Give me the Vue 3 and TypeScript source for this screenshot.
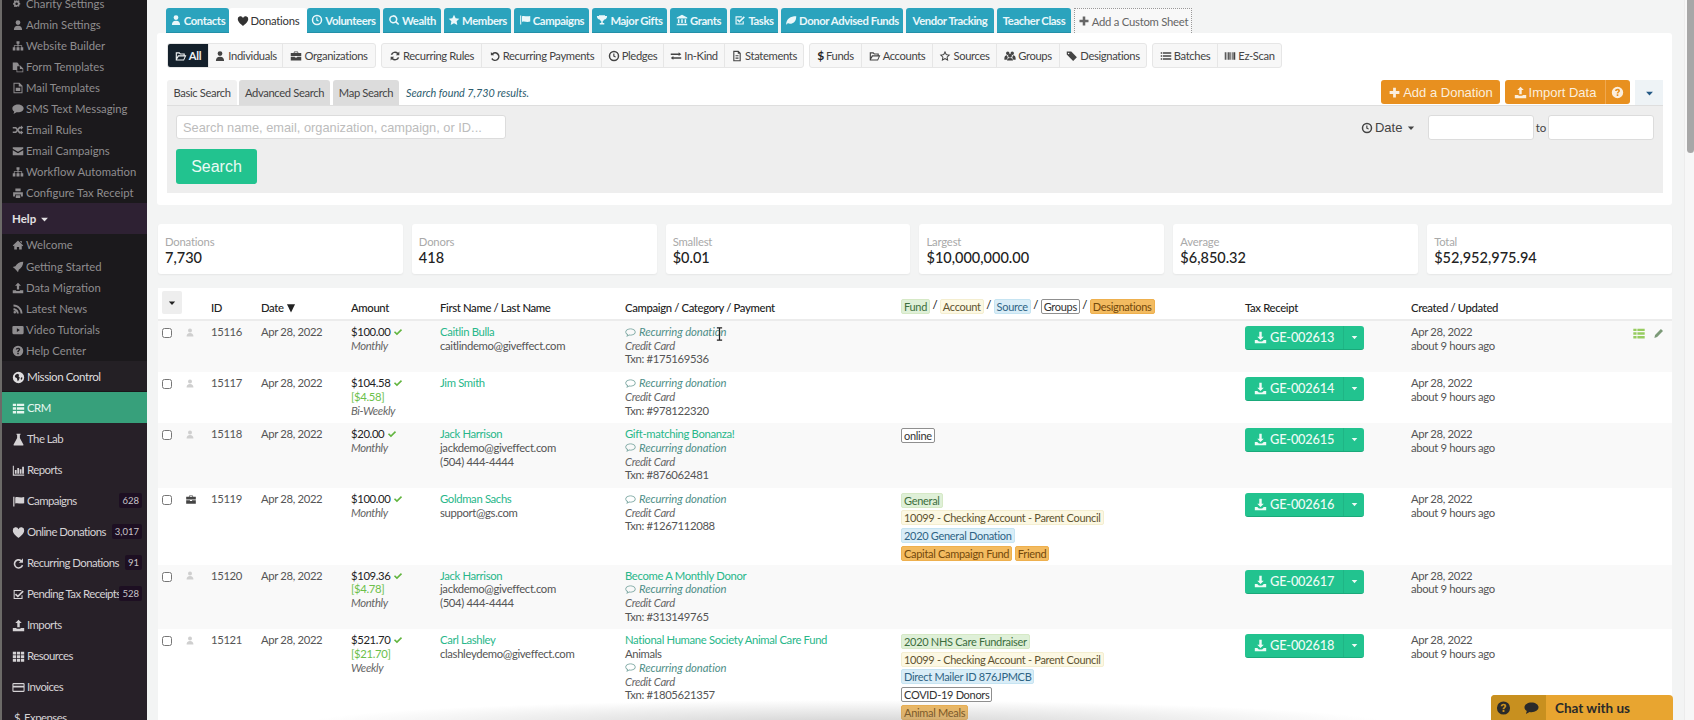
<script setup lang="ts">
import { defineComponent, h } from 'vue'

const icons: Record<string, string> = {
  user: 'M8 1.500a3.200 3.200 0 1 1 0 6.400 3.200 3.200 0 0 1 0-6.400zM2.500 14.500c0-3.600 2-5.600 5.500-5.600s5.500 2 5.500 5.600z',
  heart: 'M8 14.500S1 10 1 5.400A3.600 3.600 0 0 1 8 4a3.600 3.600 0 0 1 7 1.400C15 10 8 14.500 8 14.500z',
  clock: 'M8 1a7 7 0 1 0 0 14A7 7 0 0 0 8 1zm0 2a5 5 0 1 1 0 10A5 5 0 0 1 8 3zM7 4.500h1.600v3.200l2 1.200-.8 1.200L7 8.600z',
  search: 'M7 1.500a5.500 5.500 0 1 0 3.200 10l3.300 3.300 1.500-1.500-3.300-3.300A5.500 5.500 0 0 0 7 1.500zm0 2a3.500 3.500 0 1 1 0 7 3.500 3.500 0 0 1 0-7z',
  star: 'M8 1l2.200 4.500 4.900.7-3.600 3.500.9 4.900L8 12.300l-4.400 2.300.9-4.900L.9 6.200l4.900-.7z',
  starO: 'M8 1l2.200 4.500 4.900.7-3.600 3.500.9 4.900L8 12.300l-4.400 2.300.9-4.900L.9 6.200l4.900-.7zM8 4.200L6.700 6.800l-2.900.4 2.100 2-.5 2.900L8 10.800l2.600 1.300-.5-2.900 2.100-2-2.900-.4z',
  flag: 'M1.500 2H3v12H1.500zM4 3c3-1.500 6 1 11-.5v7.500c-5 1.500-8-1-11 .5z',
  trophy: 'M4 1.500h8v1h2.800c0 3-1.600 4.600-3.600 4.900A4 4 0 0 1 9 9.400V12h2v2H5v-2h2V9.400a4 4 0 0 1-2.200-2C2.800 7.100 1.200 5.500 1.200 2.500H4z',
  bank: 'M8 1l7 3.500V6H1V4.500zM2.500 7h2v5h-2zM7 7h2v5H7zM11.500 7h2v5h-2zM1 13h14v2H1z',
  checkO: 'M2 3h8.500v1.500h-7v8h8V9.500H13V14H2zM5.300 6.800l2 2L13 3l1.500 1.500-7.200 7.200-3.500-3.500z',
  leaf: 'M1.500 13.500C2 6.500 7 3 15 3c0 7-4 10-8 10-1.500 0-2.600-.4-3.200-.9l-1.300 1.900z',
  folder: 'M1 3h5l1.500 1.500H13V7h2.200L12 14H1zM2.500 4.500v5l1.500-2.500H11.500V6H6.800L5.300 4.500zM5 8.500l-2.500 4h8.700l1.800-4z',
  case: 'M6 2h4a1 1 0 0 1 1 1v1h4v4H1V4h4V3a1 1 0 0 1 1-1zm0 1v1h4V3zM1 9h5.500v1h3V9H15v5H1z',
  refresh: 'M13.800 2v5H9l1.800-1.800a4 4 0 0 0-6.500 1.300l-2-.5a6 6 0 0 1 9.900-2.200zM2.200 14V9H7l-1.800 1.800a4 4 0 0 0 6.500-1.300l2 .5a6 6 0 0 1-9.900 2.200z',
  undo: 'M2.500 2.500l1.700 1.700A6 6 0 1 1 3 12l1.500-1.300A4 4 0 1 0 5.600 5.600L7 7H2.500z',
  exchange: 'M1 4.500h10.500V3L15 5.500 11.500 8V6.500H1zM15 9.500H4.500V8L1 10.500 4.500 13v-1.500H15z',
  file: 'M3 1h7l3 3v11H3zM4.500 2.500v11h7V5H9V2.500zM6 7h4v1H6zM6 9h4v1H6zM6 11h4v1H6z',
  tags: 'M1 2h6l7.500 7.500-5 5L1 6zM3.500 3.500a1 1 0 1 0 0 2 1 1 0 0 0 0-2z',
  group: 'M5 2a2.300 2.300 0 1 1 0 4.600A2.300 2.300 0 0 1 5 2zM11 2a2.300 2.300 0 1 1 0 4.600A2.300 2.300 0 0 1 11 2zM8 5a2.600 2.600 0 1 1 0 5.200A2.600 2.600 0 0 1 8 5zM0.500 11c0-2.500 1.500-4 3.500-4l1 3-1.500 3H.5zM15.500 11c0-2.500-1.500-4-3.500-4l-1 3 1.500 3h3zM4 14c0-2.500 1.500-3.500 4-3.500s4 1 4 3.500z',
  list: 'M1 3h2v2H1zM4 3h11v2H4zM1 7h2v2H1zM4 7h11v2H4zM1 11h2v2H1zM4 11h11v2H4z',
  barcode: 'M1 3h1.500v10H1zM3.500 3h1v10h-1zM5.500 3h2v10h-2zM8.500 3h1v10h-1zM10.500 3h1v10h-1zM12.500 3h2.500v10h-2.500z',
  plus: 'M6.300 2h3.400v4.300H14v3.400H9.700V14H6.300V9.700H2V6.300h4.300z',
  upload: 'M8 1l4 4H9.500v5h-3V5H4zM1 11h4.500v1h5v-1H15v4H1z',
  download: 'M6.500 1h3v6H12l-4 4-4-4h2.500zM1 11h3l2 2h4l2-2h3v4H1z',
  help: 'M8 1a7 7 0 1 0 0 14A7 7 0 0 0 8 1zM8 3.500c-1.800 0-3 1-3 2.600h2c0-.6.4-1 1-1s1 .3 1 .9c0 1-2 1.200-2 3.200h2c0-1.300 2-1.500 2-3.400 0-1.500-1.200-2.300-3-2.300zM7 10.200h2v2H7z',
  caret: 'M3 5.500h10L8 11z',
  sort: 'M1.500 2h13L8 15z',
  gears: 'M6 3l1.500.5L9 3l1 1-.5 1.500L11 7v1.500l-1.500.5.500 1.500-1 1-1.500-.5L6 12l-1-.5-1.500.5-1-1 .5-1.500L1.500 8.500V7L3 5.500 2.500 4l1-1L5 3.500zM6.200 6a1.700 1.700 0 1 0 0 3.400 1.700 1.700 0 0 0 0-3.400z',
  sitemap: 'M6 1.500h4v3.500H8.800v2H13.500v2.500H15V14h-3.500V9.500h1V8H8.500v1.500H10V14H6V9.500h1.500V8H3.500v1.500h1V14H1V9.500h1.500V7h4.700V5H6z',
  files: 'M1 2h6l2 2v2h2l4 4v5H6v-3H1zM7 7v7h7v-3.500h-3.500V7z',
  mail: 'M2 1h8l4 4v10H2zM3.300 2.300v11.400h9.400V6H9V2.300zM5 7.500h6V12H5z',
  comment: 'M8 2c4 0 7.500 2.200 7.500 5.200S12 12.400 8 12.400c-.7 0-1.400 0-2-.2L2 14.500l1-3.200C1.500 10.300.5 8.800.5 7.200.5 4.200 4 2 8 2z',
  commentO: 'M8 2c4 0 7.500 2.200 7.500 5.200S12 12.400 8 12.400c-.7 0-1.400 0-2-.2L2 14.500l1-3.200C1.500 10.300.5 8.800.5 7.200.5 4.200 4 2 8 2zM8 3.200c-3.400 0-6.300 1.800-6.300 4 0 1.300 1 2.500 2.700 3.300l-.5 1.700 2-1.200c.6.100 1.400.200 2.100.200 3.400 0 6.300-1.800 6.300-4s-2.900-4-6.300-4z',
  random: 'M12 2l3 2.700L12 7.500V6h-1.500L8.800 8l1.700 2H12V8.500l3 2.800-3 2.700v-1.500h-2.500L7.500 9.800 5.500 12H1V10h3.500l1.700-2-1.700-2H1V4h4.500l2 2.200L9.500 3.500H12z',
  envelope: 'M1 3h14v2L8 9 1 5zM1 7l7 4 7-4v6.500H1z',
  print: 'M4.500 2h7v3.500h-7zM1.500 7h13v5.500H12V10H4v2.500H1.500zM5 11h6v3.500H5z',
  home: 'M8 2l7 6.500-1 1-1-.9V14H9.500v-3.500h-3V14H3V8.600l-1 .9-1-1zM11 2.500h2v3l-2-1.800z',
  rocket: 'M15 1c0 5-2.500 8.500-6 10.500L8 15l-2-2.500L3.500 10 1 8l3.500-1C6.500 3.500 10 1 15 1z',
  rss: 'M2 2c6.600 0 12 5.400 12 12h-2.500C11.500 8.800 7.200 4.500 2 4.500zM2 7c3.900 0 7 3.100 7 7H6.500C6.500 11.500 4.500 9.500 2 9.500zM3.700 10.700a1.700 1.700 0 1 1 0 3.400 1.700 1.700 0 0 1 0-3.400z',
  video: 'M2 2.500h12a1.500 1.500 0 0 1 1.500 1.500v8a1.500 1.500 0 0 1-1.500 1.500H2A1.500 1.500 0 0 1 .5 12V4A1.500 1.500 0 0 1 2 2.500zM6.500 5.500v5l4-2.500z',
  globe: 'M8 1a7 7 0 1 0 0 14A7 7 0 0 0 8 1zM4 5l2.500-1.500L9 4.500 8 6.500 9.500 8l-1 3L7 12.500 6 9 3.500 7.500zM10.500 9.500L12 7.500l1 1-1.500 2.500z',
  table: 'M1 2h4v3H1zM6 2h9v3H6zM1 6.500h4v3H1zM6 6.500h9v3H6zM1 11h4v3H1zM6 11h9v3H6z',
  flask: 'M5.500 1h5v1.300h-.8v4L14 14a1 1 0 0 1-.9 1.500H2.900A1 1 0 0 1 2 14l4.300-7.700v-4h-.8z',
  chart: 'M1 2h1.300v11H15v1.500H1zM3.500 7.500h2.200V12H3.500zM6.500 5h2.200v7H6.500zM9.500 6.500h2.200V12H9.500zM12.500 3.500h2.200V12h-2.200z',
  recycle: 'M13.500 1.500V7H8.300l1.900-1.900A4 4 0 1 0 12 9.500l1.800 1A6 6 0 1 1 11.700 3.600z',
  squareCheck: 'M2 2.500h9.500v1.300H3.300v8.400h8.400V9H13v4.500H2zM5 6.800l2.200 2.200L13 3l1.500 1.500-7.300 7.200L3.500 8.300z',
  grid: 'M1 2h4v3.500H1zM6 2h4v3.500H6zM11 2h4v3.500h-4zM1 6.500h4V10H1zM6 6.500h4V10H6zM11 6.500h4V10h-4zM1 11h4v3.500H1zM6 11h4v3.500H6zM11 11h4v3.500h-4z',
  card: 'M2 2.500h12a1.500 1.500 0 0 1 1.500 1.500v8a1.500 1.500 0 0 1-1.500 1.500H2A1.500 1.500 0 0 1 .5 12V4A1.500 1.500 0 0 1 2 2.500zM1.800 4v1.700h12.400V4zM1.800 8v4h12.400V8z',
  check: 'M1.500 8.500l1.800-1.800 3 3 6.400-6.400 1.800 1.800L6.300 13.300z',
  pencil: 'M11.500 1.500l3 3L6 13l-4 1.500L3 10z',
}

const Ico = defineComponent({
  props: { n: { type: String, required: true } },
  setup(p) {
    return () =>
      h('svg', { class: 'ico', viewBox: '0 0 16 16', 'aria-hidden': 'true' }, [
        h('path', { d: icons[p.n], 'fill-rule': 'evenodd', fill: 'currentColor' }),
      ])
  },
})

const settings = [
  ['gears', 'Charity Settings'],
  ['user', 'Admin Settings'],
  ['sitemap', 'Website Builder'],
  ['files', 'Form Templates'],
  ['mail', 'Mail Templates'],
  ['comment', 'SMS Text Messaging'],
  ['random', 'Email Rules'],
  ['envelope', 'Email Campaigns'],
  ['sitemap', 'Workflow Automation'],
  ['print', 'Configure Tax Receipt'],
]
const helpLinks = [
  ['home', 'Welcome'],
  ['rocket', 'Getting Started'],
  ['upload', 'Data Migration'],
  ['rss', 'Latest News'],
  ['video', 'Video Tutorials'],
  ['help', 'Help Center'],
]
const mainNav = [
  { icon: 'table', label: 'CRM', active: true },
  { icon: 'flask', label: 'The Lab' },
  { icon: 'chart', label: 'Reports' },
  { icon: 'flag', label: 'Campaigns', badge: '628' },
  { icon: 'heart', label: 'Online Donations', badge: '3,017' },
  { icon: 'recycle', label: 'Recurring Donations', badge: '91' },
  { icon: 'squareCheck', label: 'Pending Tax Receipts', badge: '528' },
  { icon: 'upload', label: 'Imports' },
  { icon: 'grid', label: 'Resources' },
  { icon: 'card', label: 'Invoices' },
]

const sheets = [
  ['user', 'Contacts', 63],
  ['heart', 'Donations', 78],
  ['clock', 'Volunteers', 73],
  ['search', 'Wealth', 58],
  ['star', 'Members', 67],
  ['flag', 'Campaigns', 75],
  ['trophy', 'Major Gifts', 75],
  ['bank', 'Grants', 57],
  ['checkO', 'Tasks', 48],
  ['leaf', 'Donor Advised Funds', 122],
  ['', 'Vendor Tracking', 88],
  ['', 'Teacher Class', 74],
]

const subGroups = [
  [['folder', 'All', 40], ['user', 'Individuals', 74], ['case', 'Organizations', 93]],
  [['refresh', 'Recurring Rules', 99], ['undo', 'Recurring Payments', 120], ['clock', 'Pledges', 62], ['exchange', 'In-Kind', 61], ['file', 'Statements', 79]],
  [['$', 'Funds', 51], ['folder', 'Accounts', 71], ['starO', 'Sources', 64], ['group', 'Groups', 63], ['tags', 'Designations', 87]],
  [['list', 'Batches', 64], ['barcode', 'Ez-Scan', 64]],
]

const stats = [
  ['Donations', '7,730'],
  ['Donors', '418'],
  ['Smallest', '$0.01'],
  ['Largest', '$10,000,000.00'],
  ['Average', '$6,850.32'],
  ['Total', '$52,952,975.94'],
]

type Tag = [string, string]
interface Row {
  id: number
  org?: boolean
  amount: string
  fee?: string
  freq: string
  name: string
  contact: string[]
  campaign?: string
  category?: string
  txn: string
  tags: Tag[]
  receipt: string
  actions?: boolean
}

const rows: Row[] = [
  { id: 15116, amount: '$100.00', freq: 'Monthly', name: 'Caitlin Bulla', contact: ['caitlindemo@giveffect.com'], txn: '#175169536', tags: [], receipt: 'GE-002613', actions: true },
  { id: 15117, amount: '$104.58', fee: '[$4.58]', freq: 'Bi-Weekly', name: 'Jim Smith', contact: [], txn: '#978122320', tags: [], receipt: 'GE-002614' },
  { id: 15118, amount: '$20.00', freq: 'Monthly', name: 'Jack Harrison', contact: ['jackdemo@giveffect.com', '(504) 444-4444'], campaign: 'Gift-matching Bonanza!', txn: '#876062481', tags: [['grp', 'online']], receipt: 'GE-002615' },
  { id: 15119, org: true, amount: '$100.00', freq: 'Monthly', name: 'Goldman Sachs', contact: ['support@gs.com'], txn: '#1267112088', tags: [['fund', 'General'], ['acct', '10099 - Checking Account - Parent Council'], ['src', '2020 General Donation'], ['des', 'Capital Campaign Fund'], ['des', 'Friend']], receipt: 'GE-002616' },
  { id: 15120, amount: '$109.36', fee: '[$4.78]', freq: 'Monthly', name: 'Jack Harrison', contact: ['jackdemo@giveffect.com', '(504) 444-4444'], campaign: 'Become A Monthly Donor', txn: '#313149765', tags: [], receipt: 'GE-002617' },
  { id: 15121, amount: '$521.70', fee: '[$21.70]', freq: 'Weekly', name: 'Carl Lashley', contact: ['clashleydemo@giveffect.com'], campaign: 'National Humane Society Animal Care Fund', category: 'Animals', txn: '#1805621357', tags: [['fund', '2020 NHS Care Fundraiser'], ['acct', '10099 - Checking Account - Parent Council'], ['src', 'Direct Mailer ID 876JPMCB'], ['grp', 'COVID-19 Donors'], ['des', 'Animal Meals']], receipt: 'GE-002618' },
]
</script>

<template>
  <div class="app">
    <div class="rail"></div>
    <aside class="sidebar">
      <ul class="sub first">
        <li v-for="s in settings" :key="s[1]"><Ico :n="s[0]" />{{ s[1] }}</li>
      </ul>
      <div class="help-head">Help <Ico n="caret" /></div>
      <ul class="sub">
        <li v-for="s in helpLinks" :key="s[1]"><Ico :n="s[0]" />{{ s[1] }}</li>
      </ul>
      <div class="mission"><Ico n="globe" />Mission Control</div>
      <ul class="nav">
        <li v-for="m in mainNav" :key="m.label" :class="{ active: m.active }">
          <Ico :n="m.icon" />{{ m.label }}
          <span v-if="m.badge" class="badge">{{ m.badge }}</span>
        </li>
        <li><span class="dollar">$</span>Expenses</li>
      </ul>
    </aside>

    <main class="main">
      <nav class="sheets">
        <a
          v-for="s in sheets"
          :key="s[1]"
          class="sheet"
          :class="{ current: s[1] === 'Donations' }"
          :style="{ width: s[2] + 'px' }"
        ><Ico v-if="s[0]" :n="String(s[0])" />{{ s[1] }}</a>
        <a class="sheet add"><Ico n="plus" />Add a Custom Sheet</a>
      </nav>

      <section class="panel">
        <div class="subtabs">
          <div v-for="(g, i) in subGroups" :key="i" class="subgroup">
            <a
              v-for="t in g"
              :key="t[1]"
              class="subtab"
              :class="{ on: t[1] === 'All' }"
              :style="{ width: t[2] + 'px' }"
            >
              <span v-if="t[0] === '$'" class="cash">$</span>
              <Ico v-else :n="String(t[0])" />{{ t[1] }}
            </a>
          </div>
        </div>

        <div class="search-bar">
          <a class="stab basic">Basic Search</a>
          <a class="stab adv">Advanced Search</a>
          <a class="stab map">Map Search</a>
          <em class="found">Search found 7,730 results.</em>
          <div class="actions">
            <button class="orange wide"><Ico n="plus" />Add a Donation</button>
            <div class="split">
              <button class="orange left"><Ico n="upload" />Import Data</button>
              <button class="orange right"><Ico n="help" /></button>
            </div>
            <button class="more"><Ico n="caret" /></button>
          </div>
        </div>

        <div class="search-box">
          <div class="search-left">
            <input class="q" placeholder="Search name, email, organization, campaign, or ID..." />
            <button class="go">Search</button>
          </div>
          <div class="dates">
            <span class="date-lbl"><Ico n="clock" />Date <Ico n="caret" /></span>
            <input class="d" />
            <span class="to">to</span>
            <input class="d" />
          </div>
        </div>
      </section>

      <section class="stats">
        <div v-for="s in stats" :key="s[0]" class="stat">
          <div class="stat-l">{{ s[0] }}</div>
          <div class="stat-v">{{ s[1] }}</div>
        </div>
      </section>

      <table class="grid">
        <colgroup>
          <col class="c1" /><col class="c2" /><col class="c3" /><col class="c4" /><col class="c5" />
          <col class="c6" /><col class="c7" /><col class="c8" /><col class="c9" /><col class="c10" /><col class="c11" />
        </colgroup>
        <thead>
          <tr>
            <th colspan="2"><span class="menu"><Ico n="caret" /></span></th>
            <th>ID</th>
            <th>Date <Ico n="sort" class="sort" /></th>
            <th>Amount</th>
            <th>First Name / Last Name</th>
            <th>Campaign / Category / Payment</th>
            <th class="legend">
              <span class="tag fund">Fund</span> / <span class="tag acct">Account</span> /
              <span class="tag src">Source</span> / <span class="tag grp">Groups</span> /
              <span class="tag des">Designations</span>
            </th>
            <th>Tax Receipt</th>
            <th>Created / Updated</th>
            <th></th>
          </tr>
        </thead>
        <tbody>
          <tr v-for="r in rows" :key="r.id">
            <td><input type="checkbox" class="pick" /></td>
            <td><Ico :n="r.org ? 'case' : 'user'" class="who" :class="{ org: r.org }" /></td>
            <td>{{ r.id }}</td>
            <td>Apr 28, 2022</td>
            <td>
              <div class="amt">{{ r.amount }} <Ico n="check" class="ok" /></div>
              <div v-if="r.fee" class="fee">{{ r.fee }}</div>
              <div class="it">{{ r.freq }}</div>
            </td>
            <td>
              <div class="link">{{ r.name }}</div>
              <div v-for="c in r.contact" :key="c">{{ c }}</div>
            </td>
            <td>
              <div v-if="r.campaign" class="link">{{ r.campaign }}</div>
              <div v-if="r.category">{{ r.category }}</div>
              <div class="rec"><Ico n="commentO" />Recurring donation</div>
              <div class="it">Credit Card</div>
              <div>Txn: {{ r.txn }}</div>
            </td>
            <td class="tags">
              <template v-for="(t, i) in r.tags" :key="i">
                <span class="tag" :class="t[0]">{{ t[1] }}</span>
                <br v-if="t[1] !== 'Capital Campaign Fund'" />
                <template v-else>&nbsp;</template>
              </template>
            </td>
            <td class="btn-cell">
              <div class="receipt">
                <span class="r-main"><Ico n="download" />{{ r.receipt }}</span>
                <span class="r-drop"><Ico n="caret" /></span>
              </div>
            </td>
            <td>Apr 28, 2022<br />about 9 hours ago</td>
            <td>
              <div v-if="r.actions" class="row-act">
                <Ico n="table" /><Ico n="pencil" class="edit" />
              </div>
            </td>
          </tr>
        </tbody>
      </table>
    </main>

    <div class="scrollbar"><div class="thumb"></div></div>

    <div class="vignette"></div>
    <svg class="ibeam" viewBox="0 0 8 16" aria-hidden="true">
      <path d="M1 1h6M4 1v14M1 15h6" fill="none" stroke="#222" stroke-width="1.400" />
    </svg>
    <div class="chat">
      <div class="chat-ic"><Ico n="help" /><Ico n="comment" /></div>
      <div class="chat-t">Chat with us</div>
    </div>
  </div>
</template>

<style scoped>
.app {
  position: relative;
  display: flex;
  width: 1694px;
  height: 720px;
  overflow: hidden;
  background: #f3f4f4;
  font-family: Lato, 'Open Sans', sans-serif;
  font-size: 11.500px;
  color: #555;
}
.ico {
  display: inline-block;
  width: 11px;
  height: 11px;
  flex: none;
  vertical-align: -1.500px;
  margin-right: 2px;
}
.rail {
  width: 2px;
  background: #6c6a68;
  flex: none;
}
.sidebar {
  width: 145px;
  flex: none;
  background: #272028;
  overflow: hidden;
}
.sub {
  list-style: none;
  margin: 0;
  padding: 0;
  background: #1b191c;
  color: #8f8d8f;
}
.sub.first {
  margin-top: -7.500px;
}
.sub li {
  height: 21.100px;
  line-height: 21.100px;
  padding-left: 10px;
  font-size: 11.300px;
  white-space: nowrap;
}
.sub .ico {
  width: 12px;
  height: 12px;
  margin-right: 2px;
  vertical-align: -2px;
}
.help-head {
  height: 31px;
  line-height: 31px;
  padding-left: 10px;
  background: #2e2133;
  color: #e2e0e2;
  font-size: 11.500px;
  font-weight: 700;
}
.help-head .ico {
  width: 11px;
  height: 11px;
}
.mission {
  height: 31px;
  line-height: 31px;
  padding-left: 10px;
  background: #242025;
  color: #dedcde;
  font-size: 11.600px;
  letter-spacing: -0.450px;
  border-bottom: 1px solid #1a171a;
  box-sizing: border-box;
}
.mission .ico,
.nav .ico {
  width: 13px;
  height: 13px;
  margin-right: 2px;
  vertical-align: -2.500px;
}
.nav {
  list-style: none;
  margin: 0;
  padding: 0;
  color: #d5d2d5;
}
.nav li {
  position: relative;
  height: 31px;
  line-height: 31px;
  padding-left: 10px;
  font-size: 11.400px;
  letter-spacing: -0.550px;
  white-space: nowrap;
}
.nav li.active {
  background: #37a07b;
  color: #e6f6ef;
}
.badge {
  position: absolute;
  right: 5px;
  top: 8px;
  height: 15px;
  line-height: 15px;
  padding: 0 3px;
  background: #1d0f22;
  color: #c8c4c8;
  font-size: 9.500px;
  letter-spacing: 0;
  border-radius: 2px;
}
.dollar {
  margin: 0 4px 0 2px;
}

.main {
  flex: 1;
  min-width: 0;
  padding: 8px 12px 0 10px;
}
.sheets {
  display: flex;
  gap: 3px;
  padding-left: 9px;
  height: 25px;
}
.sheet {
  display: flex;
  align-items: center;
  justify-content: center;
  box-sizing: border-box;
  height: 25px;
  background: #2ba3bd;
  color: #eaf7fa;
  font-size: 11.300px;
  font-weight: 700;
  letter-spacing: -0.400px;
  border-radius: 3px 3px 0 0;
  border-bottom: 1px solid #2390a8;
  white-space: nowrap;
}
.sheet .ico {
  width: 12px;
  height: 12px;
}
.sheet.current {
  background: #fff;
  color: #333;
  font-weight: 400;
  letter-spacing: -0.250px;
  border: 0;
  margin: 0 -3px;
}
.sheet.add {
  width: 118px;
  background: #f8f8f8;
  color: #666;
  font-weight: 400;
  letter-spacing: -0.250px;
  border: 1px dotted #999;
  border-bottom: 0;
  margin-left: 0;
  border-radius: 0;
}

.panel {
  background: #fff;
  padding: 10px 9px 12px 10px;
  border-radius: 3px;
}
.subtabs {
  display: flex;
  gap: 5px;
}
.subgroup {
  display: flex;
  background: #f7f7f7;
  border: 1px solid #e6e6e6;
  border-radius: 3px;
  overflow: hidden;
}
.subtab {
  display: flex;
  align-items: center;
  justify-content: center;
  box-sizing: border-box;
  height: 23px;
  font-size: 11.200px;
  letter-spacing: -0.350px;
  color: #444;
  white-space: nowrap;
  border-left: 1px solid #e6e6e6;
}
.subtab .ico {
  width: 12px;
  height: 12px;
}
.subtab:first-child {
  border-left: 0;
}
.subtab.on {
  background: #14202b;
  color: #eef1f3;
  font-weight: 700;
}
.cash {
  color: #222;
  font-weight: 700;
  margin-right: 2px;
  font-size: 12px;
}
.search-bar {
  display: flex;
  align-items: flex-end;
  margin-top: 12px;
  height: 25px;
}
.stab {
  box-sizing: border-box;
  height: 25px;
  line-height: 25px;
  text-align: center;
  background: #dcdcdc;
  color: #444;
  font-size: 11.200px;
  letter-spacing: -0.350px;
  border-radius: 3px 3px 0 0;
  white-space: nowrap;
}
.stab.basic {
  width: 70px;
  background: #f1f1f1;
}
.stab.adv {
  width: 91px;
  margin-left: 2px;
}
.stab.map {
  width: 66px;
  margin-left: 3px;
}
.found {
  margin: 0 0 6px 7px;
  color: #2c5c6e;
  font-size: 10.800px;
}
.actions {
  margin-left: auto;
  display: flex;
  gap: 5px;
  align-self: flex-start;
}
.orange {
  height: 24px;
  border: 0;
  padding: 0;
  background: #e8901f;
  color: #fbeedd;
  font: 500 13px 'Liberation Sans', Arial, sans-serif;
  border-radius: 3px;
}
.orange .ico {
  width: 13px;
  height: 13px;
  vertical-align: -2.500px;
}
.wide {
  width: 119px;
}
.split {
  display: flex;
}
.left {
  width: 100px;
  border-radius: 3px 0 0 3px;
}
.right {
  width: 25px;
  border-radius: 0 3px 3px 0;
  border-left: 1px solid #f0a84f;
}
.more {
  width: 28px;
  height: 25px;
  border: 0;
  background: #eef3f6;
  color: #245a86;
  padding: 0;
}
.more .ico {
  margin: 0;
}
.search-box {
  display: flex;
  justify-content: space-between;
  background: #eee;
  border-top: 1px solid #dedede;
  box-sizing: border-box;
  height: 88px;
  padding: 9px;
}
.search-left {
  display: flex;
  flex-direction: column;
  align-items: flex-start;
  gap: 10px;
}
.q,
.d {
  box-sizing: border-box;
  height: 25px;
  border: 1px solid #dcdcdc;
  border-radius: 3px;
  background: #fff;
  padding: 0 6px;
  outline: 0;
}
.q {
  width: 330px;
  font: 12.800px 'Liberation Sans', Arial, sans-serif;
}
.q::placeholder {
  color: #bcbcbc;
}
.go {
  width: 81px;
  height: 36px;
  border: 0;
  border-radius: 3px;
  background: #22c38f;
  color: #eafaf4;
  font: 500 16px 'Liberation Sans', Arial, sans-serif;
}
.dates {
  display: flex;
  align-items: flex-start;
}
.date-lbl {
  margin: 5px 12px 0 0;
  color: #444;
  font: 13px 'Liberation Sans', Arial, sans-serif;
  white-space: nowrap;
}
.date-lbl .ico {
  width: 12px;
  height: 12px;
  vertical-align: -2px;
}
.date-lbl .ico:last-child {
  margin: 0;
  width: 10px;
  height: 10px;
  vertical-align: -1px;
}
.d {
  width: 106px;
}
.to {
  width: 14px;
  text-align: center;
  line-height: 25px;
  color: #444;
}

.stats {
  display: grid;
  grid-template-columns: repeat(6, 1fr);
  gap: 9px;
  margin-top: 19px;
  padding-left: 1px;
}
.stat {
  height: 50px;
  box-sizing: border-box;
  padding: 10px 7px 0;
  background: #fff;
  border-radius: 3px;
  box-shadow: 0 1px 2px rgba(0, 0, 0, 0.06);
}
.stat-l {
  color: #a9a9a9;
  font-size: 11.300px;
  letter-spacing: -0.200px;
  line-height: 15px;
}
.stat-v {
  color: #222;
  font-size: 14.500px;
  font-weight: 500;
  line-height: 18px;
}

.grid {
  margin: 14px 0 0 1px;
  width: 1514px;
  table-layout: fixed;
  border-collapse: collapse;
  background: #fff;
  line-height: 13.700px;
  font-size: 11.300px;
  letter-spacing: -0.350px;
}
.c1 { width: 27px; }
.c2 { width: 26px; }
.c3 { width: 50px; }
.c4 { width: 90px; }
.c5 { width: 89px; }
.c6 { width: 185px; }
.c7 { width: 276px; }
.c8 { width: 344px; }
.c9 { width: 166px; }
.c10 { width: 219px; }
.c11 { width: 42px; }
th {
  height: 32px;
  padding: 0;
  text-align: left;
  vertical-align: bottom;
  padding-bottom: 4px;
  box-sizing: border-box;
  font-weight: 500;
  color: #222;
  font-size: 11.300px;
  border-bottom: 2px solid #ececec;
  white-space: nowrap;
}
.menu {
  display: flex;
  align-items: center;
  justify-content: center;
  width: 20px;
  height: 23px;
  margin: 0 0 1px 4px;
  background: #eee;
  color: #222;
  border-radius: 2px;
}
.menu .ico {
  margin: 0;
  width: 10px;
  height: 10px;
}
.sort {
  width: 10px;
  height: 10px;
  vertical-align: -1px;
}
.legend {
  padding-bottom: 5px;
}
td {
  padding: 4px 0 6px;
  vertical-align: top;
  white-space: nowrap;
}
tbody tr:nth-child(odd) {
  background: #f9f9f9;
}
.pick {
  display: block;
  width: 10px;
  height: 10px;
  margin: 3px 0 0 4px;
}
.who {
  color: #cfcfcf;
  width: 10px;
  height: 11px;
  margin-left: 0;
}
.who.org {
  color: #444;
  width: 12px;
}
.amt {
  color: #222;
}
.ok {
  color: #62b53f;
  width: 10px;
  height: 10px;
  vertical-align: -1px;
}
.fee {
  color: #6cc04a;
}
.it {
  font-style: italic;
  color: #666;
}
.link {
  color: #28b78a;
}
.rec {
  font-style: italic;
  color: #4f8f88;
  letter-spacing: -0.100px;
}
.rec .ico {
  margin-right: 3px;
  color: #7da8a3;
}
td.tags {
  line-height: 17.300px;
  padding: 2px 0 4px;
}
.tag {
  display: inline-block;
  box-sizing: border-box;
  height: 15px;
  line-height: 13px;
  padding: 0 2px;
  border: 1px solid transparent;
  border-radius: 2px;
  font-size: 11px;
  letter-spacing: -0.300px;
  font-weight: 400;
  vertical-align: middle;
}
.fund {
  background: #dff0d8;
  border-color: #d6e9c6;
  color: #3c6e3d;
}
.acct {
  background: #fcf8e3;
  border-color: #f4eed0;
  color: #5f5330;
}
.src {
  background: #d9edf7;
  border-color: #c6e4f2;
  color: #2f6485;
}
.grp {
  background: #fff;
  border-color: #8f8f8f;
  color: #333;
}
.des {
  background: #f3bb60;
  border-color: #eeb04e;
  color: #74490b;
}
td.btn-cell {
  padding-top: 5px;
  padding-bottom: 5px;
}
.receipt {
  display: flex;
  width: 119px;
  height: 24px;
  background: #22c38f;
  color: #eefbf6;
  border-radius: 3px;
  border-bottom: 1px solid #1aa97a;
  box-sizing: border-box;
  font-size: 12.800px;
  letter-spacing: -0.200px;
  font-weight: 500;
  line-height: 23px;
}
.r-main {
  flex: 1;
  padding-left: 9px;
}
.r-main .ico {
  width: 13px;
  height: 13px;
  margin-right: 3px;
  vertical-align: -2px;
}
.r-drop {
  width: 20px;
  text-align: center;
  border-left: 1px solid #1fb585;
}
.r-drop .ico {
  width: 9px;
  height: 9px;
  margin: 0;
  vertical-align: 0;
}
.row-act {
  display: flex;
  gap: 7px;
  padding: 2px 0 0 2px;
  color: #97cc60;
}
.row-act .ico {
  width: 14px;
  height: 13px;
  margin: 0;
}
.row-act .edit {
  color: #7c9a78;
  width: 11px;
}

.scrollbar {
  width: 10px;
  flex: none;
  background: #f7f7f7;
  border-left: 1px solid #ececec;
  box-sizing: border-box;
}
.thumb {
  width: 7px;
  height: 153px;
  margin: 0 0 0 2px;
  border-radius: 0 0 4px 4px;
  background: #a7a7a7;
}

.vignette {
  position: absolute;
  left: 300px;
  right: 300px;
  bottom: -30px;
  height: 50px;
  background: radial-gradient(closest-side, rgba(150, 150, 150, 0.45), rgba(170, 170, 170, 0));
  pointer-events: none;
}
.ibeam {
  position: absolute;
  left: 716px;
  top: 327px;
  width: 7px;
  height: 14px;
}
.chat {
  position: absolute;
  left: 1491px;
  top: 695px;
  width: 182px;
  height: 25px;
  display: flex;
  align-items: center;
  background: #e8a530;
  border-radius: 4px 4px 0 0;
  overflow: hidden;
  color: #2a2a2a;
}
.chat-ic {
  display: flex;
  align-items: center;
  gap: 13px;
  width: 55px;
  height: 100%;
  padding-left: 5px;
  box-sizing: border-box;
  background: #c8901f;
}
.chat-ic .ico {
  width: 15px;
  height: 16px;
  margin: 0;
}
.chat-t {
  padding-left: 9px;
  font-size: 13.500px;
  font-weight: 700;
}
</style>

<style>
html,
body {
  margin: 0;
  overflow: hidden;
}
</style>
